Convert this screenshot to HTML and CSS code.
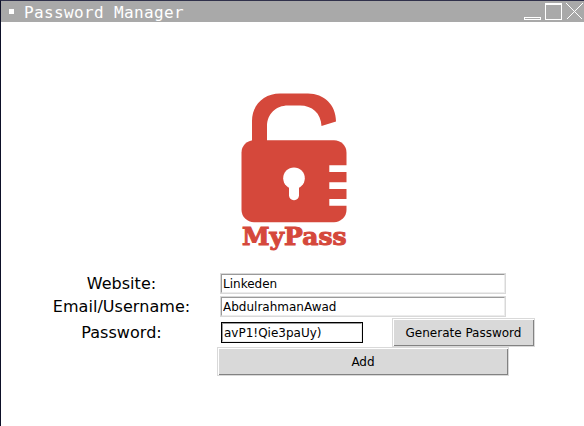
FILE: index.html
```html
<!DOCTYPE html>
<html lang="en">
<head>
<meta charset="utf-8">
<title>Password Manager</title>
<link rel="stylesheet" href="styles.css">
</head>
<body>
<div class="window">
  <header class="titlebar">
    <span class="menu-mark"></span>
    <span class="title">Password Manager</span>
    <svg class="controls" width="60" height="21" viewBox="0 0 60 21" fill="none" stroke="#fff" shape-rendering="crispEdges">
      <rect x="0.5" y="16.5" width="16" height="2"/>
      <rect x="21.5" y="2.5" width="16" height="16"/>
      <path d="M21 3.5h17"/>
      <path d="M42.5 2.5l16 16M58.5 2.5l-16 16"/>
    </svg>
  </header>
  <main class="content">
    <svg class="logo" width="120" height="170" viewBox="0 0 120 170" fill="#d5483b">
      <path d="M18 56V35C18 19 30 7.6 46 7.6H74C90 7.6 102 19 102 35.5L87.5 40C87 27 78 19.4 66 19.4H54C42 19.4 33 28 33 40V56Z"/>
      <rect x="7.5" y="54.2" width="105" height="82" rx="12.5"/>
      <g fill="#fff">
        <path d="M95.3 79.3h18v6.8h-18zM95.3 96.3h18v6.8h-18zM95.3 113h18v6.8h-18z"/>
        <circle cx="60" cy="92.2" r="10.8"/>
        <rect x="55" y="96" width="10" height="18.2" rx="4.8"/>
      </g>
      <text class="logo-text" x="8" y="158.7" textLength="104.5" lengthAdjust="spacingAndGlyphs">MyPass</text>
    </svg>
    <div class="form">
      <div class="row">
        <label class="label" for="site">Website:</label>
        <input class="entry" id="site" value="Linkeden">
      </div>
      <div class="row row-email">
        <label class="label" for="email">Email/Username:</label>
        <input class="entry" id="email" value="AbdulrahmanAwad">
      </div>
      <div class="row row-password">
        <label class="label" for="pass">Password:</label>
        <input class="entry entry-focus" id="pass" value="avP1!Qie3paUy)">
        <button class="button generate"><span>Generate Password</span></button>
      </div>
      <button class="button add"><span>Add</span></button>
    </div>
  </main>
</div>
</body>
</html>
```
FILE: styles.css
```css
* { box-sizing: border-box; }

body {
  margin: 0;
  overflow: hidden;
  background: #fff;
  font-family: "DejaVu Sans", sans-serif;
  color: #000;
}

.window {
  height: 426px;
  border-top: 1px solid #30314b;
  border-left: 1px solid #0d1028;
}

.titlebar {
  display: flex;
  align-items: center;
  height: 21px;
  padding-left: 8px;
  background: #a9a9a9;
  color: #fff;
}

.menu-mark {
  width: 5px;
  height: 5px;
  background: #fff;
}

.title {
  padding-top: 2px;
  margin-left: 10px;
  font: 16px/21px "DejaVu Sans Mono", monospace;
  letter-spacing: 0.37px;
  white-space: pre;
}

.controls { margin-left: auto; }

.content {
  display: flex;
  flex-direction: column;
  padding-top: 64px;
}

.logo {
  display: block;
  margin-left: 233px;
}

.logo-text {
  font: bold 23.5px "DejaVu Serif", serif;
  stroke: #d5483b;
  stroke-width: 1px;
}

.form {
  display: flex;
  flex-direction: column;
  margin-top: 17px;
}

.row {
  display: flex;
  align-items: center;
  height: 21px;
}

.row-email { margin-top: 2px; }

.row-password {
  height: 29px;
  margin-top: 1px;
}

.label {
  width: 219px;
  padding-right: 20px;
  padding-left: 42px;
  font-size: 16px;
  line-height: 21px;
  text-align: center;
  white-space: nowrap;
  letter-spacing: 0.05px;
}

.entry {
  border: 1px solid;
  border-color: #9a9a9a #ececec #ececec #9a9a9a;
  outline: 1px solid #d9d9d9;
  border-radius: 0;
  padding: 0 1px;
  background: #fff;
  color: #000;
  font: 12px "DejaVu Sans", sans-serif;
}

.row .entry {
  width: 284px;
  height: 19px;
  margin: 1px;
}

.row .entry-focus {
  width: 140px;
  margin: 0 0 0 2px;
  outline-color: #000;
}

.button {
  padding: 1px 0 0 1px;
  border: 1px solid #d9d9d9;
  background: #fff;
  color: #000;
  font: 12px "DejaVu Sans", sans-serif;
}

.button span {
  display: flex;
  align-items: center;
  justify-content: center;
  height: 100%;
  border-right: 1px solid #828282;
  border-bottom: 1px solid #828282;
  background: #d9d9d9;
}

.generate {
  width: 143px;
  height: 29px;
  margin-left: 30px;
}

.add {
  width: 292px;
  height: 29px;
  margin-left: 216px;
}
```
